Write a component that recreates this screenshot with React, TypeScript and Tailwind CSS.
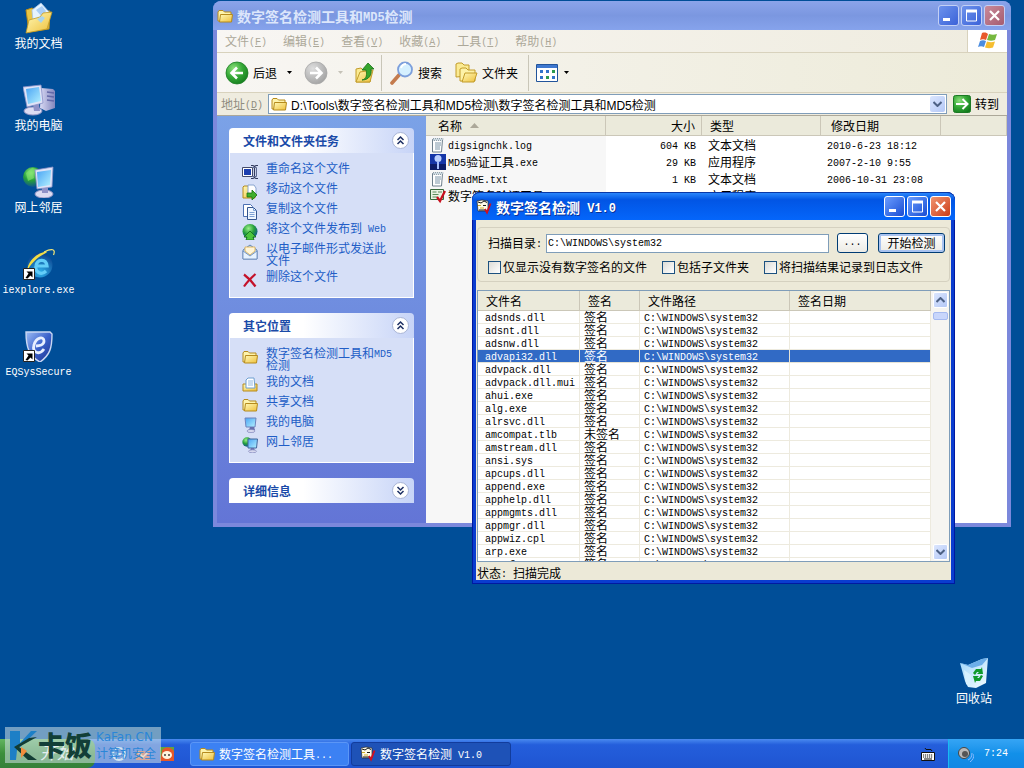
import React from "react";

type Kids = { children?: React.ReactNode };

/* Sets Latin runs in a half-width face next to full-width Han characters. */
function Mix({ text, title = false }: { text: string; title?: boolean }) {
  const runs = text.match(/[\x20-\x7e]+|[^\x20-\x7e]+/g) ?? [];
  return (
    <>
      {runs.map((run, i) =>
        /^[\x20-\x7e]/.test(run) ? (
          <span
            key={i}
            className={
              title
                ? "align-[1px] font-['Liberation_Mono',monospace] text-xs leading-[0]"
                : "align-[1px] font-['Liberation_Mono',monospace] text-[10px] leading-[0]"
            }
          >
            {run}
          </span>
        ) : (
          run
        )
      )}
    </>
  );
}

/* ---------- large desktop icons ---------- */

function Svg({ s = 16, box = 16, children }: Kids & { s?: number; box?: number }) {
  return (
    <svg width={s} height={s} viewBox={`0 0 ${box} ${box}`} fill="none" aria-hidden="true" className="shrink-0">
      {children}
    </svg>
  );
}

function Gradients() {
  return (
    <svg width="0" height="0" className="absolute" aria-hidden="true">
      <defs>
        <linearGradient id="gFolder" x1="0" y1="0" x2="1" y2="1">
          <stop offset="0" stopColor="#fff9b8" />
          <stop offset="1" stopColor="#eebf3a" />
        </linearGradient>
        <linearGradient id="gScreen" x1="0" y1="0" x2="1" y2="1">
          <stop offset="0" stopColor="#4aa4f4" />
          <stop offset="1" stopColor="#b4f1ff" />
        </linearGradient>
        <linearGradient id="gTower" x1="0" y1="0" x2="1" y2="0">
          <stop offset="0" stopColor="#d9daf4" />
          <stop offset="1" stopColor="#8386bd" />
        </linearGradient>
        <radialGradient id="gGlobe" cx="0.4" cy="0.3" r="0.75">
          <stop offset="0" stopColor="#9bf08a" />
          <stop offset="0.5" stopColor="#27a03a" />
          <stop offset="1" stopColor="#0b4c9a" />
        </radialGradient>
        <radialGradient id="gIe" cx="0.5" cy="0.8" r="0.8">
          <stop offset="0" stopColor="#2fb2ec" />
          <stop offset="1" stopColor="#0a3f8c" />
        </radialGradient>
        <linearGradient id="gShield" x1="0" y1="0" x2="1" y2="1">
          <stop offset="0" stopColor="#9dbdf6" />
          <stop offset="0.5" stopColor="#3b62cb" />
          <stop offset="1" stopColor="#1a2f8c" />
        </linearGradient>
        <radialGradient id="gGreen" cx="0.35" cy="0.3" r="0.8">
          <stop offset="0" stopColor="#8de07c" />
          <stop offset="0.5" stopColor="#35a837" />
          <stop offset="1" stopColor="#127a1c" />
        </radialGradient>
        <radialGradient id="gGray" cx="0.35" cy="0.3" r="0.8">
          <stop offset="0" stopColor="#dedede" />
          <stop offset="1" stopColor="#9f9f9f" />
        </radialGradient>
        <linearGradient id="gBin" x1="0" y1="0" x2="1" y2="1">
          <stop offset="0" stopColor="#9fd6fb" />
          <stop offset="1" stopColor="#f4fcff" />
        </linearGradient>
      </defs>
    </svg>
  );
}

function DocsIcon() {
  return (
    <Svg s={32} box={32}>
      <path d="M3 8l6-2 3 2 15 1-1 18-20 3z" fill="#e9c545" stroke="#b98d1c" />
      <path d="M9 8l9-7 8 9-3 9H10z" fill="#e6f3ff" stroke="#a7c4e6" strokeWidth=".8" />
      <path d="M13 8l6-4 4 5-4 6z" fill="#a8cdf6" />
      <path d="M3 31l3-13 11-3 3-4 9-1-5 17z" fill="url(#gFolder)" stroke="#c39a25" strokeWidth=".8" />
      <path d="M14 17l4 4 4-5-3-2z" fill="#a8d4ee" />
    </Svg>
  );
}

function ComputerIcon() {
  return (
    <Svg s={32} box={32}>
      <path d="M18 4l12 1 2 2v17l-9 3-6-3z" fill="url(#gTower)" />
      <path d="M24 8l7 1M24 12l7 1M24 16l7 1" stroke="#6468a8" strokeWidth="1.4" />
      <ellipse cx="10" cy="27" rx="9" ry="4" fill="#dcdcf2" stroke="#9797c6" />
      <path d="M10 20h6l1 7h-6z" fill="#8f92c8" />
      <path d="M0 3l18-2 2 18-16 4z" fill="#dfe3f7" stroke="#8a90c8" strokeWidth=".8" />
      <path d="M3 5l13-2 2 14-13 3z" fill="url(#gScreen)" />
    </Svg>
  );
}

function NetworkIcon() {
  return (
    <Svg s={32} box={32}>
      <circle cx="10" cy="11" r="10" fill="url(#gGlobe)" />
      <path d="M3 7l6-5 5 1-4 5 1 4-6 3z" fill="#7ce06a" opacity=".7" />
      <ellipse cx="21" cy="28" rx="9" ry="4" fill="#dcdcf2" stroke="#9797c6" />
      <path d="M19 20h6v7h-6z" fill="#8f92c8" />
      <path d="M12 4l18-3-1 20-15 2z" fill="#dfe3f7" stroke="#8a90c8" strokeWidth=".8" />
      <path d="M14 6l14-2-1 15-12 2z" fill="url(#gScreen)" />
    </Svg>
  );
}

function Shortcut() {
  return (
    <>
      <path d="M.5 20.5h11v11h-11z" fill="#fff" stroke="#222" />
      <path d="M2.500 30l3-4.500-2-2h6v6l-2-2-3 3z" fill="#000" />
    </>
  );
}

function IeIcon() {
  return (
    <Svg s={32} box={32}>
      <circle cx="17" cy="17" r="12.5" fill="url(#gIe)" />
      <path d="M23 23c-5 5-11 1-10-5 1-7 10-8 11 0H14" stroke="#63cdf8" strokeWidth="3.2" />
      <path d="M4 23C5 13 13 6 21 4c3-1 4 0 1 1.500C13 10 8 16 4 23z" fill="#f4dc44" />
      <path d="M21 4c8-4 12-3 9.500 3" stroke="#f4e675" strokeWidth="1.2" />
      <Shortcut />
    </Svg>
  );
}

function ShieldIcon() {
  return (
    <Svg s={32} box={32}>
      <path d="M3 2h24l2 2c0 14-2 21-12 28C6 26 3 17 3 2z" fill="url(#gShield)" stroke="#c9d7f3" strokeWidth="1.4" />
      <path d="M21 19c-5 7-12 3-10-4 2-8 10-9 10-4 0 4-5 5-8 5" stroke="#e7efff" strokeWidth="2.8" />
      <Shortcut />
    </Svg>
  );
}

function BinIcon() {
  return (
    <Svg s={32} box={32}>
      <path d="M2 6l8 2 14-6 6-1-2 25-10 5-8-1-3-6z" fill="url(#gBin)" />
      <path d="M2 6l8 2 14-6 6-1-6 7-10 3z" fill="#6caee9" />
      <path d="M6 13l7 5-1 12-4-3z" fill="#d7f1ff" />
      <path d="M15 16l3-4h5l1-2 1 7h-6l2-2h-2l-2 3z" fill="#0f9a2b" />
      <path d="M25 19l-3 5h-4l-1 2-2-7h6l-2 2h2l2-3z" fill="#0f9a2b" />
    </Svg>
  );
}

/* ---------- small icons ---------- */

function Folder({ s = 16 }: { s?: number }) {
  return (
    <Svg s={s}>
      <path d="M1 13V4l1-1.500h4L7.500 4H14v9z" fill="#fdf3ac" stroke="#b58a1d" />
      <path d="M3.500 6.500h12L14.500 14h-12z" fill="url(#gFolder)" stroke="#b58a1d" />
    </Svg>
  );
}

function DocsSmall() {
  return (
    <Svg>
      <path d="M1 14V7h14v7z" fill="url(#gFolder)" stroke="#b58a1d" />
      <path d="M4 11V3l2-2h6l1 10z" fill="#fff" stroke="#6f9fd0" />
      <path d="M6 4h5M6 6h5M6 8h5" stroke="#92b9e4" />
    </Svg>
  );
}

function ComputerSmall() {
  return (
    <Svg>
      <path d="M3 1h11l-1 9H4z" fill="url(#gScreen)" stroke="#6d83bd" />
      <path d="M8 10h4l1 3H7z" fill="#6870ad" />
      <ellipse cx="9" cy="14" rx="4" ry="1.600" fill="#d6d8ee" stroke="#8085ba" strokeWidth=".7" />
    </Svg>
  );
}

function NetSmall() {
  return (
    <Svg>
      <circle cx="5" cy="5" r="4.700" fill="url(#gGlobe)" />
      <path d="M6 2h9.500l-1 9H6z" fill="url(#gScreen)" stroke="#41669c" />
      <path d="M9 11h3l1 3H8z" fill="#6870ad" />
      <ellipse cx="10.500" cy="14.300" rx="4" ry="1.500" fill="#d6d8ee" stroke="#8085ba" strokeWidth=".7" />
    </Svg>
  );
}

function RenameIcon() {
  return (
    <Svg>
      <path d="M.500 3.500h10v9H.500z" fill="#fff" stroke="#444c6c" />
      <path d="M2 5h7v6H2z" fill="#1c3fb0" />
      <path d="M9 1.500h2l1.500 1 1.500-1h2M12.500 2v12M9 14.500h2l1.500-1 1.500 1h2" stroke="#333b5e" strokeWidth="1.200" />
      <path d="M10.500 3.500h4v9h-4" stroke="#5f6a90" />
    </Svg>
  );
}

function MoveIcon() {
  return (
    <Svg>
      <path d="M1 14V3l1-1h4l1 2h6v10z" fill="url(#gFolder)" stroke="#b58a1d" />
      <path d="M6 1h6l2 3v6H6z" fill="#fff" stroke="#8aa5d0" />
      <path d="M5 9h5V6l5 5-5 5v-3H5z" fill="#3fae2c" stroke="#17730e" strokeWidth=".8" />
    </Svg>
  );
}

function CopyIcon() {
  return (
    <Svg>
      <path d="M1.500.500h7l2 2v10h-9z" fill="#fff" stroke="#4c70b3" />
      <path d="M5.500 3.500h6l3 3v9h-9z" fill="#eef6ff" stroke="#34558f" />
      <path d="M11.500 3.500v3h3M7.500 8.500h5M7.500 10.500h5M7.500 12.500h5" stroke="#7ea1d5" />
    </Svg>
  );
}

function PublishIcon() {
  return (
    <Svg>
      <circle cx="8" cy="7.500" r="7.500" fill="url(#gGlobe)" />
      <path d="M8 7l6 6h-3l1 3H4l1-3H2z" fill="#4cc53d" stroke="#0f6a1a" strokeWidth=".8" />
    </Svg>
  );
}

function MailIcon() {
  return (
    <Svg>
      <path d="M1 6l7-5 7 5v9H1z" fill="#c3dcf5" stroke="#6587b5" />
      <path d="M3 7V3h10v4l-5 4z" fill="#fff5d8" stroke="#d9a94a" strokeWidth=".8" />
      <path d="M1 7l7 5 7-5v8H1z" fill="#e6f2ff" stroke="#6587b5" strokeWidth=".8" />
    </Svg>
  );
}

function DeleteIcon() {
  return (
    <Svg>
      <path d="M2 2.500c4 3 8 7 11.500 12M13.500 2C9 6 5 10 2 14.500" stroke="#c4122b" strokeWidth="2.200" />
    </Svg>
  );
}

function NotepadIcon() {
  return (
    <Svg>
      <path d="M2.500 2.500h10l-1 12.500h-9z" fill="#fff" stroke="#6e7f8c" />
      <path d="M3 1.500h10v2H3z" fill="#c6d4dc" stroke="#6e7f8c" strokeWidth=".7" strokeDasharray="1 1" />
      <path d="M5 6h6M5 8h6M5 10h5M5 12h5" stroke="#7c95a8" />
    </Svg>
  );
}

function KeyIcon() {
  return (
    <Svg>
      <path d="M0 0h16v16H0z" fill="#1636a8" />
      <path d="M0 10h16v6H0z" fill="#0c1c68" />
      <circle cx="8" cy="4.500" r="3.500" fill="#bcd0ff" />
      <path d="M7 7h2v8H7z" fill="#a5beff" />
    </Svg>
  );
}

function SignIcon() {
  return (
    <Svg>
      <path d="M.500 1.500h13v10H.500z" fill="#eaf3e4" stroke="#38683c" />
      <path d="M2.500 4h4M8 4h4M2.500 6.500h6M2.500 9h5" stroke="#5c8c5c" />
      <path d="M7 9l3 4 5-10" stroke="#c8101e" strokeWidth="2.300" />
    </Svg>
  );
}

function CheckerIcon() {
  return (
    <Svg>
      <path d="M1 2l5-1 6 1v10H2z" fill="#fdfbe9" stroke="#2a2a2a" strokeWidth=".7" />
      <path d="M2 3l3 1 3-2 3 1.500M7 6.500h3M3 11h7" stroke="#1a1a1a" />
      <path d="M2 6.500h3M4 9h4" stroke="#cfae2b" />
      <path d="M9 10l2 3.500 3.500-9" stroke="#cf1020" strokeWidth="1.900" />
    </Svg>
  );
}

/* ---------- chrome ---------- */

function Caption({ kind, dim = false }: { kind: "min" | "max" | "close"; dim?: boolean }) {
  const label = { min: "最小化", max: "最大化", close: "关闭" }[kind];
  const fill =
    kind === "close"
      ? dim
        ? "bg-linear-to-br from-[#c98a9a] to-[#a55c70]"
        : "bg-linear-to-br from-[#f0936f] to-[#cc3a10]"
      : dim
        ? "bg-linear-to-br from-[#6d92ec] to-[#3c62d8]"
        : "bg-linear-to-br from-[#6b9cff] to-[#1a4bd2]";
  return (
    <button
      aria-label={label}
      className={`flex size-[21px] items-center justify-center rounded-[3px] border ${dim ? "border-[#c3d0f5]" : "border-white"} ${fill}`}
    >
      <svg width="13" height="13" viewBox="0 0 13 13" fill="none" stroke="#fff" aria-hidden="true">
        {kind === "min" && <path d="M1 10.500h7" strokeWidth="3" />}
        {kind === "max" && <path d="M1.500 1v11h10V1M1 2.500h11" strokeWidth="1" />}
        {kind === "max" && <path d="M1 2h11" strokeWidth="3" />}
        {kind === "close" && <path d="M2 2l9 9M11 2l-9 9" strokeWidth="2.200" />}
      </svg>
    </button>
  );
}

function Captions({ dim = false }: { dim?: boolean }) {
  return (
    <div className="ml-auto flex gap-[2px]">
      <Caption kind="min" dim={dim} />
      <Caption kind="max" dim={dim} />
      <Caption kind="close" dim={dim} />
    </div>
  );
}

function DownArrow({ muted = false }: { muted?: boolean }) {
  return (
    <svg width="7" height="4" viewBox="0 0 7 4" aria-hidden="true" className="shrink-0">
      <path d="M1 0h5L3.500 3z" fill={muted ? "#c5c2b8" : "#000"} />
    </svg>
  );
}

function Chevron({ up = false }: { up?: boolean }) {
  return (
    <svg width="9" height="6" viewBox="0 0 9 6" fill="none" stroke="#4d6185" strokeWidth="2" aria-hidden="true">
      <path d={up ? "M.500 5l4-4 4 4" : "M.500 1l4 4 4-4"} />
    </svg>
  );
}

function ScrollButton({ up = false }: { up?: boolean }) {
  return (
    <button
      aria-label={up ? "向上滚动" : "向下滚动"}
      className="flex h-4 w-[15px] items-center justify-center rounded-[2px] border border-white bg-linear-to-br from-[#dbe6fe] to-[#b4c8f6]"
    >
      <Chevron up={up} />
    </button>
  );
}

/* ---------- explorer ---------- */

function TaskPanel({
  title,
  open = true,
  items = [],
}: {
  title: string;
  open?: boolean;
  items?: { icon: React.ReactNode; text: string }[];
}) {
  return (
    <section>
      <h2 className="flex h-[25px] items-center justify-between rounded-t-[4px] bg-linear-to-r from-white from-40% to-[#c7d4f7] pl-[14px] pr-1 text-[12px] leading-[14px] font-bold text-[#1a4aa8]">
        {title}
        <button aria-label={open ? "折叠" : "展开"} className="flex size-5 items-center justify-center">
          <svg width="19" height="19" viewBox="0 0 19 19" fill="none" aria-hidden="true">
            <circle cx="9.500" cy="9.500" r="8" fill="#fff" stroke="#a9b5d6" />
            <path
              d={open ? "M6.500 9l3-3 3 3M6.500 13l3-3 3 3" : "M6.500 6l3 3 3-3M6.500 10l3 3 3-3"}
              stroke="#1d2f63"
              strokeWidth="1.500"
            />
          </svg>
        </button>
      </h2>
      {open && (
        <ul className="flex flex-col gap-1 border border-t-0 border-white bg-[#d6dff7] pt-[9px] pr-5 pb-[11px] pl-3">
          {items.map((it) => (
            <li key={it.text}>
              <a
                href="#"
                className="flex min-h-4 items-start gap-2 text-[12px] leading-3 text-[#215dc6] [&>svg]:mt-0.5 [&>svg]:-mb-0.5"
              >
                {it.icon}
                <span>
                  <Mix text={it.text} />
                </span>
              </a>
            </li>
          ))}
        </ul>
      )}
    </section>
  );
}

const MENUS: [string, string][] = [
  ["文件", "F"],
  ["编辑", "E"],
  ["查看", "V"],
  ["收藏", "A"],
  ["工具", "T"],
  ["帮助", "H"],
];

const FILES = [
  { icon: <NotepadIcon />, name: "digsignchk.log", size: "604 KB", type: "文本文档", date: "2010-6-23 18:12" },
  { icon: <KeyIcon />, name: "MD5验证工具.exe", size: "29 KB", type: "应用程序", date: "2007-2-10 9:55" },
  { icon: <NotepadIcon />, name: "ReadME.txt", size: "1 KB", type: "文本文档", date: "2006-10-31 23:08" },
  { icon: <SignIcon />, name: "数字签名验证工具", size: "", type: "应用程序", date: "" },
];

function ToolbarSep() {
  return <span className="h-9 w-px bg-[#c9c6b8]" />;
}

function AccessKey({ k }: { k: string }) {
  return (
    <span className="align-[1px] font-['Liberation_Mono',monospace] text-[10px] leading-[0]">
      (<u>{k}</u>)
    </span>
  );
}

function Explorer() {
  return (
    <section
      aria-label="资源管理器"
      className="absolute top-px left-[213px] flex h-[526px] w-[798px] flex-col rounded-t-lg bg-[#7b88dc] px-1 pb-1"
    >
      <header className="-mx-1 flex h-[29px] shrink-0 items-center gap-1 rounded-t-lg bg-linear-to-b from-[#8ba4ea] via-[#7b97e0] to-[#86a3ec] pr-1.5 pl-1">
        <Folder />
        <h1 className="text-[14px] leading-4 font-bold text-[#dce6fb]">
          <Mix text="数字签名检测工具和MD5检测" title />
        </h1>
        <Captions dim />
      </header>

      <nav className="flex h-[23px] shrink-0 items-center border-b border-[#d8d2bd] bg-linear-to-r from-[#f8f6f3] to-[#efecdf]">
        {MENUS.map(([name, key]) => (
          <button key={key} className="px-2 text-[12px] leading-[14px] whitespace-nowrap text-[#aca899]">
            {name}
            <AccessKey k={key} />
          </button>
        ))}
        <span className="ml-auto flex h-full w-10 items-center justify-center border-l border-[#d8d2bd] bg-white">
          <svg width="22" height="18" viewBox="0 0 22 18" aria-hidden="true">
            <path d="M5 1c3-1 5 0 6 1l-2 6c-2-1-4-1-6 0z" fill="#e8592b" />
            <path d="M12 2c3 1 5 1 8 0l-2 6c-3 1-5 1-8 0z" fill="#76b83f" />
            <path d="M3 9c2-1 4-1 6 0l-2 6c-2-1-4-1-6 0z" fill="#4b8de0" />
            <path d="M10 9.500c3 1 5 1 8 0l-2 6c-3 1-5 1-8 0z" fill="#f6bd2f" />
          </svg>
        </span>
      </nav>

      <div className="flex h-10 shrink-0 items-center border-b border-[#d8d2bd] bg-linear-to-r from-[#f8f6f3] to-[#edebd9] pl-2 text-[12px] leading-[14px] whitespace-nowrap text-black">
        <button className="flex items-center gap-1">
          <Svg s={24} box={24}>
            <circle cx="12" cy="12" r="11" fill="url(#gGreen)" stroke="#1d7d24" strokeWidth=".8" />
            <path d="M18 12H7M12 6.500L6.500 12l5.500 5.500" stroke="#fff" strokeWidth="2.600" />
          </Svg>
          后退
        </button>
        <button aria-label="后退列表" className="ml-2 p-px">
          <DownArrow />
        </button>
        <button aria-label="前进" className="ml-[10px]">
          <Svg s={24} box={24}>
            <circle cx="12" cy="12" r="11" fill="url(#gGray)" stroke="#a7a7a7" strokeWidth=".8" />
            <path d="M6 12h11M12 6.500l5.500 5.500-5.500 5.500" stroke="#fff" strokeWidth="2.600" />
          </Svg>
        </button>
        <button aria-label="前进列表" className="ml-2 p-px">
          <DownArrow muted />
        </button>
        <button aria-label="向上" className="mr-1 ml-2">
          <Svg s={24} box={24}>
            <path d="M3 21V8l5-1 2 2h8l-1 12z" fill="#fbeb93" stroke="#c29c2a" />
            <path d="M3 21l4-10 13-2-3 12z" fill="url(#gFolder)" stroke="#c29c2a" />
            <path d="M9 19c5-1 5-6 4-10H9l6-7 6 6h-3c1 6-2 11-9 11z" fill="#35a52d" stroke="#177015" strokeWidth=".8" />
          </Svg>
        </button>
        <ToolbarSep />
        <button className="ml-2 flex items-center gap-1">
          <Svg s={24} box={24}>
            <path d="M9 14l-7 8" stroke="#c47b4d" strokeWidth="3.600" strokeLinecap="round" />
            <circle cx="15" cy="8.500" r="7" fill="#d5f0ff" stroke="#7c9fdc" strokeWidth="1.800" />
            <path d="M11 7c1-3 3-4 5-4" stroke="#fff" strokeWidth="2" />
          </Svg>
          搜索
        </button>
        <button className="ml-3 flex items-center gap-1">
          <Svg s={24} box={24}>
            <path d="M2 16V3l2-1h4l2 2h5v11z" fill="#fbeb93" stroke="#c29c2a" />
            <path d="M6 20V8l2-1h4l2 2h7v11z" fill="#fdf2a8" stroke="#c29c2a" />
            <path d="M8 21l3-9h12l-3 9z" fill="url(#gFolder)" stroke="#c29c2a" />
          </Svg>
          文件夹
        </button>
        <span className="ml-2.5 flex">
          <ToolbarSep />
        </span>
        <button aria-label="查看方式" className="ml-1.5 flex items-center gap-1">
          <Svg s={24} box={24}>
            <path d="M1.500 3.500h21v17h-21z" fill="#fff" stroke="#22549b" />
            <path d="M2 4h20v3H2z" fill="#3f78cf" />
            <path d="M5 9h3v3H5zM11 9h3v3h-3zM5 15h3v3H5zM17 15h3v3h-3z" fill="#3173c9" />
            <path d="M17 9h3v3h-3zM11 15h3v3h-3z" fill="#2b9b4d" />
          </Svg>
          <DownArrow />
        </button>
      </div>

      <div className="flex h-[23px] shrink-0 items-center border-b border-[#aca899] bg-[#efecdf] pr-2 pl-1 text-[12px] leading-[14px] whitespace-nowrap">
        <label htmlFor="address" className="mr-[5px] text-[#8f8c7f]">
          地址
          <AccessKey k="D" />
        </label>
        <div className="flex h-5 min-w-0 flex-1 items-center gap-1 border border-[#7f9db9] bg-white pr-px pl-0.5">
          <Folder />
          <input
            id="address"
            defaultValue="D:\Tools\数字签名检测工具和MD5检测\数字签名检测工具和MD5检测"
            className="h-4 min-w-0 flex-1 bg-transparent font-['Liberation_Sans','Noto_Sans_CJK_SC',sans-serif] text-[12px] text-black outline-none"
          />
          <button
            aria-label="地址列表"
            className="flex h-4 w-[15px] items-center justify-center rounded-[2px] bg-linear-to-br from-[#dbe6fe] to-[#b4c8f6]"
          >
            <Chevron />
          </button>
        </div>
        <button className="ml-1.5 flex items-center gap-1 text-black">
          <svg width="18" height="18" viewBox="0 0 18 18" fill="none" aria-hidden="true">
            <rect x=".5" y=".5" width="17" height="17" rx="2" fill="url(#gGreen)" stroke="#1c7a25" />
            <path d="M3 9h11M9.500 4l5 5-5 5" stroke="#fff" strokeWidth="2" />
          </svg>
          转到
        </button>
      </div>

      <div className="flex min-h-0 flex-1">
        <aside className="flex w-[209px] shrink-0 flex-col gap-[15px] bg-linear-to-b from-[#7ba2e7] to-[#6375d6] p-3">
          <TaskPanel
            title="文件和文件夹任务"
            items={[
              { icon: <RenameIcon />, text: "重命名这个文件" },
              { icon: <MoveIcon />, text: "移动这个文件" },
              { icon: <CopyIcon />, text: "复制这个文件" },
              { icon: <PublishIcon />, text: "将这个文件发布到 Web" },
              { icon: <MailIcon />, text: "以电子邮件形式发送此文件" },
              { icon: <DeleteIcon />, text: "删除这个文件" },
            ]}
          />
          <TaskPanel
            title="其它位置"
            items={[
              { icon: <Folder />, text: "数字签名检测工具和MD5检测" },
              { icon: <DocsSmall />, text: "我的文档" },
              { icon: <Folder />, text: "共享文档" },
              { icon: <ComputerSmall />, text: "我的电脑" },
              { icon: <NetSmall />, text: "网上邻居" },
            ]}
          />
          <TaskPanel title="详细信息" open={false} />
        </aside>

        <div className="flex min-w-0 flex-1 flex-col bg-white">
          <table className="w-full table-fixed border-separate border-spacing-0 text-left text-[12px] leading-[14px] whitespace-nowrap text-black">
            <colgroup>
              <col className="w-[180px]" />
              <col className="w-[96px]" />
              <col className="w-[119px]" />
              <col className="w-[120px]" />
              <col />
            </colgroup>
            <thead>
              <tr className="h-5 bg-[#ebeadb] *:border-r *:border-b *:border-[#cbc7b8] *:p-0 *:font-normal">
                <th>
                  <span className="flex items-center gap-2 pl-3">
                    名称
                    <svg width="9" height="5" viewBox="0 0 9 5" aria-hidden="true">
                      <path d="M0 5h9L4.500 0z" fill="#aca899" />
                    </svg>
                  </span>
                </th>
                <th>
                  <span className="block pr-1.5 text-right">大小</span>
                </th>
                <th>
                  <span className="block pl-2">类型</span>
                </th>
                <th>
                  <span className="block pl-2.5">修改日期</span>
                </th>
                <th aria-label="其他" />
              </tr>
            </thead>
            <tbody>
              {FILES.map((f) => (
                <tr key={f.name} className="h-[17px] *:p-0">
                  <td className="bg-[#f7f7f7]">
                    <span className="flex h-[17px] items-center gap-0.5 pl-1">
                      {f.icon}
                      <span>
                        <Mix text={f.name} />
                      </span>
                    </span>
                  </td>
                  <td>
                    <span className="block pr-1.5 text-right">
                      <Mix text={f.size} />
                    </span>
                  </td>
                  <td>
                    <span className="block pl-1.5">{f.type}</span>
                  </td>
                  <td>
                    <span className="block pl-1.5">
                      <Mix text={f.date} />
                    </span>
                  </td>
                  <td />
                </tr>
              ))}
            </tbody>
          </table>
          <div className="w-[180px] flex-1 bg-[#f7f7f7]" />
        </div>
      </div>
    </section>
  );
}

/* ---------- signature checker ---------- */

const DLLS = [
  "adsnds.dll",
  "adsnt.dll",
  "adsnw.dll",
  "advapi32.dll",
  "advpack.dll",
  "advpack.dll.mui",
  "ahui.exe",
  "alg.exe",
  "alrsvc.dll",
  "amcompat.tlb",
  "amstream.dll",
  "ansi.sys",
  "apcups.dll",
  "append.exe",
  "apphelp.dll",
  "appmgmts.dll",
  "appmgr.dll",
  "appwiz.cpl",
  "arp.exe",
  "asr_fmt.exe",
];

function Check({ id, text }: { id: string; text: string }) {
  return (
    <span className="flex items-center gap-0.5">
      <input
        id={id}
        type="checkbox"
        className="size-[13px] appearance-none border border-[#1c5180] bg-linear-to-br from-[#dcdcd7] to-white checked:bg-[#21a121]"
      />
      <label htmlFor={id}>{text}</label>
    </span>
  );
}

function Checker() {
  return (
    <section
      aria-label="数字签名检测"
      className="absolute top-48 left-[472px] flex w-[483px] flex-col rounded-t-lg bg-[#0a3ccf] px-1 pb-1 text-[12px] leading-[14px] text-black shadow-[inset_0_0_0_1px_#0019a0]"
    >
      <header className="-mx-1 flex h-7 items-center gap-1 rounded-t-lg border-t border-[#0838a8] bg-linear-to-b from-[#2a86fb] from-0% via-[#0255e4] via-25% to-[#0466fb] pr-1 pl-1">
        <CheckerIcon />
        <h1 className="text-[14px] leading-4 font-bold text-white [text-shadow:1px_1px_#0a3297]">
          <Mix text="数字签名检测 V1.0" title />
        </h1>
        <Captions />
      </header>

      <div className="bg-[#ece9d8] px-px pt-[7px]">
        <div className="flex h-[55px] flex-col gap-1.5 rounded-[4px] border border-[#d5d1c0] pt-[5px] pr-1 pl-2.5">
          <div className="flex items-center">
            <label htmlFor="dir" className="mr-1 whitespace-nowrap">
              <Mix text="扫描目录:" />
            </label>
            <input
              id="dir"
              defaultValue="C:\WINDOWS\system32"
              className="h-[19px] min-w-0 flex-1 border border-[#7f9db9] bg-white px-px font-['Liberation_Mono',monospace] text-[10px] outline-none"
            />
            <button
              aria-label="浏览"
              className="ml-2 h-5 w-[31px] rounded-[3px] border border-[#003c74] bg-linear-to-b from-white to-[#ecebe5] font-['Liberation_Mono',monospace] text-[10px] leading-3"
            >
              ...
            </button>
            <button className="ml-2.5 h-5 w-[67px] rounded-[3px] border border-[#003c74] bg-linear-to-b from-white to-[#ecebe5] shadow-[inset_0_0_0_2px_#a9c3f0]">
              开始检测
            </button>
          </div>
          <div className="flex h-4 items-center gap-[15px] whitespace-nowrap">
            <Check id="unsigned" text="仅显示没有数字签名的文件" />
            <Check id="sub" text="包括子文件夹" />
            <Check id="log" text="将扫描结果记录到日志文件" />
          </div>
        </div>

        <div className="mt-2 flex h-[272px] border border-[#7f9db9] bg-white">
          <div className="min-w-0 flex-1 overflow-hidden">
            <table className="w-full table-fixed border-separate border-spacing-0 text-left whitespace-nowrap">
              <colgroup>
                <col className="w-[102px]" />
                <col className="w-[60px]" />
                <col className="w-[150px]" />
                <col />
              </colgroup>
              <thead>
                <tr className="h-5 bg-[#ebeadb] *:border-r *:border-b *:border-[#cbc7b8] *:p-0 *:pl-2 *:font-normal">
                  <th>文件名</th>
                  <th>签名</th>
                  <th>文件路径</th>
                  <th>签名日期</th>
                </tr>
              </thead>
              <tbody className="leading-3">
                {DLLS.map((name) => (
                  <tr
                    key={name}
                    className={
                      name === "advapi32.dll"
                        ? "h-[13px] text-white *:border-r *:border-b *:border-[#e6e3d6] *:bg-[#316ac5] *:p-0 *:pl-1"
                        : "h-[13px] *:border-r *:border-b *:border-[#edeade] *:p-0 *:pl-1"
                    }
                  >
                    <td>
                      <span className="block h-3 pl-[3px]">
                        <Mix text={name} />
                      </span>
                    </td>
                    <td>
                      <span className="block h-3">{name === "amcompat.tlb" ? "未签名" : "签名"}</span>
                    </td>
                    <td>
                      <span className="block h-3">
                        <Mix text="C:\WINDOWS\system32" />
                      </span>
                    </td>
                    <td />
                  </tr>
                ))}
              </tbody>
            </table>
          </div>
          <div className="flex w-[18px] flex-col items-center gap-1 bg-[#f6f5f1] py-px">
            <ScrollButton up />
            <span className="h-2 w-[15px] rounded-[2px] border border-[#a5baf0] bg-[#c8d6fb]" />
            <span className="flex-1" />
            <ScrollButton />
          </div>
        </div>

        <p className="h-[18px] pt-1">
          <Mix text="状态: 扫描完成" />
        </p>
      </div>
    </section>
  );
}

/* ---------- desktop ---------- */

function DesktopItem({ icon, text }: { icon: React.ReactNode; text: string }) {
  return (
    <button className="flex h-[82px] flex-col items-center gap-0.5 text-[12px] leading-[14px] whitespace-nowrap text-white">
      {icon}
      <span>
        <Mix text={text} />
      </span>
    </button>
  );
}

function Watermark() {
  return (
    <div className="absolute bottom-[5px] left-[5px] flex h-9 w-[156px] items-center bg-[#cfe0e6]/55 pl-1">
      <svg width="29" height="31" viewBox="0 0 29 31" aria-hidden="true" className="shrink-0">
        <path d="M1 1h10v12L22 1h6L8 20l-1 10H1z" fill="#1d7fc6" />
        <path d="M28 7L10 17l18 13h-9L5 17l15-9z" fill="#123c33" />
        <path d="M12 17l6 4-6 7z" fill="#f08c3c" />
      </svg>
      <span className="text-[27px] leading-8 font-black text-[#123f38]">卡饭</span>
      <span className="ml-1 flex flex-col whitespace-nowrap text-[#2a86d8]">
        <span className="font-['DejaVu_Sans',sans-serif] text-[12px] leading-4">KaFan.CN</span>
        <span className="text-[12px] leading-4">计算机安全</span>
      </span>
    </div>
  );
}

function Taskbar() {
  return (
    <footer className="relative flex h-[29px] shrink-0 items-center bg-linear-to-b from-[#4a8af0] from-0% via-[#245edb] via-20% to-[#1f55d2] text-[12px] leading-[14px] text-white">
      <button className="flex h-full w-[95px] items-center rounded-r-lg bg-linear-to-b from-[#63b560] via-[#3c8f3b] to-[#36803a] pb-1 pl-10 text-[17px] leading-5 italic">
        开始
      </button>
      <div className="ml-4 flex items-center gap-2">
        <Svg>
          <circle cx="8" cy="8" r="6" stroke="#d8f0ff" strokeWidth="2" />
          <path d="M3 8h10" stroke="#d8f0ff" strokeWidth="2" />
        </Svg>
        <Svg>
          <path d="M1 5h14v9H1z" fill="#e0623c" />
          <path d="M3 6l5 5 5-5" stroke="#ffe0c8" strokeWidth="1.500" />
        </Svg>
        <Svg>
          <path d="M1 1h14v14H1z" fill="#5fa541" />
          <path d="M3 6c0-6 11-6 12 0v9H1z" fill="#e4572b" />
          <ellipse cx="8" cy="9" rx="5" ry="4" fill="#fff4df" />
          <path d="M6 8v2M10 8v2" stroke="#222" strokeWidth="1.300" />
        </Svg>
      </div>
      <div className="ml-[15px] flex gap-0.5">
        <button className="flex h-6 w-[159px] items-center gap-1 rounded-[3px] border border-[#5b96f6] bg-[#3c81f3] px-2 whitespace-nowrap">
          <Folder />
          <span>
            <Mix text="数字签名检测工具..." />
          </span>
        </button>
        <button className="flex h-6 w-[160px] items-center gap-1 rounded-[3px] border border-[#123c9c] bg-[#1e52b7] px-2 whitespace-nowrap">
          <CheckerIcon />
          <span>
            <Mix text="数字签名检测 V1.0" />
          </span>
        </button>
      </div>
      <svg width="14" height="14" viewBox="0 0 14 14" fill="none" aria-hidden="true" className="mr-[13px] ml-auto">
        <path d="M4 1l1 1.500h5L11 4" stroke="#111" />
        <path d="M.500 5.500h13v8H.500z" fill="#fff" stroke="#111" />
        <path d="M2 8h10M2 10h10" stroke="#111" strokeWidth="1.200" strokeDasharray="1.200 .8" />
        <path d="M3 12h8" stroke="#111" />
      </svg>
      <div className="flex h-full w-[76px] items-center gap-2.5 border-l border-[#19b9f3] bg-linear-to-b from-[#35a5f5] via-[#1290e9] to-[#1287e4] pl-[9px]">
        <Svg>
          <circle cx="6" cy="7" r="5.500" fill="#b9b9b9" stroke="#444" />
          <circle cx="7" cy="8" r="3" fill="#555" />
          <path d="M10 14c3-1 4-4 4-7M12 16c3-2 4-5 4-8" stroke="#8ebcff" />
        </Svg>
        <time className="font-['Liberation_Mono',monospace] text-[10px]">7:24</time>
      </div>
      <Watermark />
    </footer>
  );
}

export default function App() {
  return (
    <div className="flex h-screen flex-col overflow-hidden bg-[#004e98] font-['Noto_Sans_CJK_SC',sans-serif]">
      <Gradients />
      <main className="relative min-h-0 flex-1">
        <div className="flex w-[77px] flex-col items-stretch pt-0.5">
          <DesktopItem icon={<DocsIcon />} text="我的文档" />
          <DesktopItem icon={<ComputerIcon />} text="我的电脑" />
          <DesktopItem icon={<NetworkIcon />} text="网上邻居" />
          <DesktopItem icon={<IeIcon />} text="iexplore.exe" />
          <DesktopItem icon={<ShieldIcon />} text="EQSysSecure" />
        </div>
        <div className="absolute right-8 bottom-0">
          <DesktopItem icon={<BinIcon />} text="回收站" />
        </div>
        <Explorer />
        <Checker />
      </main>
      <Taskbar />
    </div>
  );
}
